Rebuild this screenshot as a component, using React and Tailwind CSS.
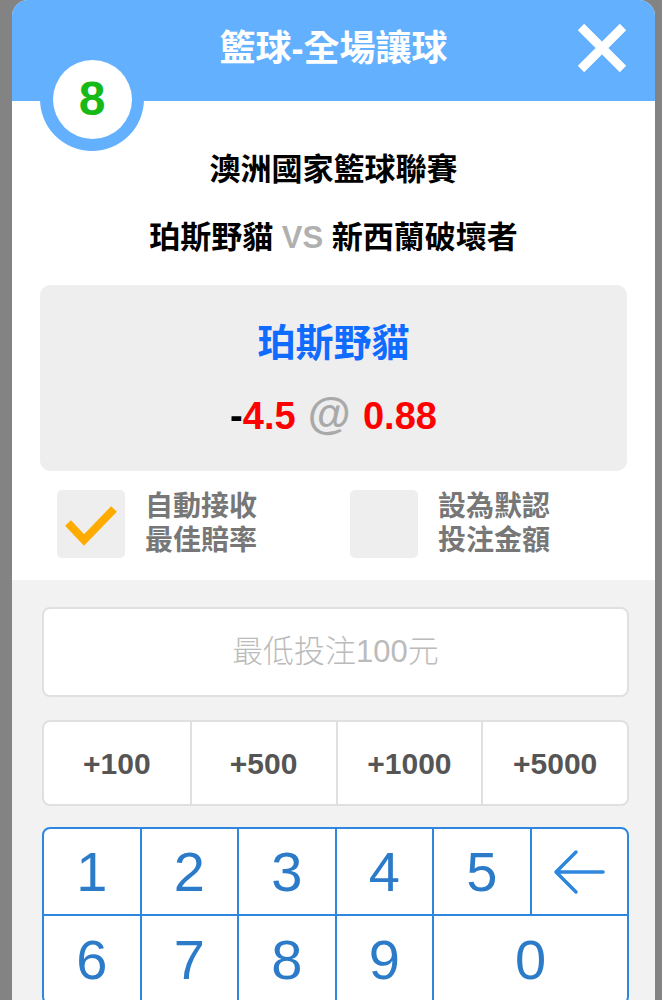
import { useState } from 'react';

const cjk = { fontFamily: '"Liberation Sans", "Noto Sans CJK TC", sans-serif' };

const quickAmounts = [100, 500, 1000, 5000];

function Checkbox({ checked }) {
  return (
    <div className="w-[68px] h-[68px] rounded-[5px] bg-[#eeeeee] shrink-0">
      {checked && (
        <svg width="68" height="68" viewBox="0 0 68 68">
          <polyline
            points="11,33 27,50 57,19"
            fill="none"
            stroke="#ffab00"
            strokeWidth="8"
          />
        </svg>
      )}
    </div>
  );
}

export default function App() {
  const [amount, setAmount] = useState('');
  const [autoAccept, setAutoAccept] = useState(true);
  const [setDefault, setSetDefault] = useState(false);

  const press = (k) => {
    if (k === 'back') setAmount(amount.slice(0, -1));
    else setAmount(amount + k);
  };

  return (
    <div className="min-h-screen bg-[#838383] pl-[12px]" style={cjk}>
      <div className="relative w-[643px] min-h-screen rounded-t-[16px] overflow-hidden bg-[#f2f2f2]">
        {/* header */}
        <div className="relative h-[101px] bg-[#63b1fe] flex items-center justify-center">
          <h1 className="text-[36px] leading-none font-bold text-white -mt-[4px]">籃球-全場讓球</h1>
          <button className="absolute right-[28px] top-[23px] w-[50px] h-[50px]">
            <svg width="50" height="50" viewBox="0 0 50 50">
              <path d="M4 4 L46 46 M46 4 L4 46" stroke="white" strokeWidth="9" />
            </svg>
          </button>
        </div>

        {/* badge */}
        <div className="absolute left-[28px] top-[47px] w-[104px] h-[104px] rounded-full bg-[#63b1fe] flex items-center justify-center">
          <div className="w-[79px] h-[79px] rounded-full bg-white flex items-center justify-center">
            <span className="text-[48px] leading-none font-bold text-[#16b916]">8</span>
          </div>
        </div>

        {/* body */}
        <div className="bg-white pt-[49px] pb-[22px]">
          <p className="text-center text-[31px] leading-[40px] font-bold text-black">澳洲國家籃球聯賽</p>
          <p className="mt-[28px] text-center text-[31px] leading-[40px] font-bold text-black">
            珀斯野貓 <span className="text-[#b0b0b0]">VS</span> 新西蘭破壞者
          </p>

          <div className="mx-[28px] mt-[27px] h-[186px] rounded-[10px] bg-[#eeeeee] pt-[36px] flex flex-col items-center">
            <p className="text-[38px] leading-[44px] font-bold text-[#0f6cff]">珀斯野貓</p>
            <p className="mt-[25px] text-[38px] leading-[48px] font-bold">
              <span className="text-black">-</span>
              <span className="text-[#ff0000]">4.5</span>
              <span className="text-[#a9a9a9] text-[44px]"> @ </span>
              <span className="text-[#ff0000]">0.88</span>
            </p>
          </div>

          <div className="mt-[19px] flex">
            <button className="ml-[45px] w-[293px] flex items-center text-left" onClick={() => setAutoAccept(!autoAccept)}>
              <Checkbox checked={autoAccept} />
              <span className="ml-[20px] text-[28px] leading-[34px] font-bold text-[#777777]">
                自動接收
                <br />
                最佳賠率
              </span>
            </button>
            <button className="flex items-center text-left" onClick={() => setSetDefault(!setDefault)}>
              <Checkbox checked={setDefault} />
              <span className="ml-[20px] text-[28px] leading-[34px] font-bold text-[#777777]">
                設為默認
                <br />
                投注金額
              </span>
            </button>
          </div>
        </div>

        {/* stake area */}
        <div className="pt-[27px] pl-[30px] pb-[10px]">
          <input
            value={amount}
            readOnly
            placeholder="最低投注100元"
            className="w-[587px] h-[90px] rounded-[8px] border-2 border-[#e0e0e0] bg-white text-center text-[31px] font-light text-[#555555] placeholder:text-[#bbbbbb] outline-none"
          />

          <div className="mt-[23px] w-[587px] h-[86px] grid grid-cols-4 rounded-[8px] border-2 border-[#e0e0e0] bg-white overflow-hidden">
            {quickAmounts.map((a, i) => (
              <button
                key={a}
                onClick={() => setAmount(String((parseInt(amount || '0', 10)) + a))}
                className={
                  'text-[30px] font-bold text-[#555555] ' + (i > 0 ? 'border-l-2 border-[#e0e0e0]' : '')
                }
              >
                +{a}
              </button>
            ))}
          </div>

          <div className="mt-[21px] w-[587px] rounded-[8px] border-2 border-[#2e86de] bg-[#2e86de] overflow-hidden grid grid-cols-6 gap-[2px]">
            {['1', '2', '3', '4', '5'].map((k) => (
              <button key={k} onClick={() => press(k)} className="h-[85px] bg-white text-[56px] text-[#2b7bc9]">
                {k}
              </button>
            ))}
            <button onClick={() => press('back')} className="h-[85px] bg-white flex items-center justify-center">
              <svg width="54" height="46" viewBox="0 0 54 46">
                <path
                  d="M4 23 H51 M24 3 L4 23 L24 43"
                  fill="none"
                  stroke="#2e86de"
                  strokeWidth="3.5"
                  strokeLinecap="round"
                  strokeLinejoin="round"
                />
              </svg>
            </button>
            {['6', '7', '8', '9'].map((k) => (
              <button key={k} onClick={() => press(k)} className="h-[87px] bg-white text-[56px] text-[#2b7bc9]">
                {k}
              </button>
            ))}
            <button onClick={() => press('0')} className="col-span-2 h-[87px] bg-white text-[56px] text-[#2b7bc9]">
              0
            </button>
          </div>
        </div>
      </div>
    </div>
  );
}
